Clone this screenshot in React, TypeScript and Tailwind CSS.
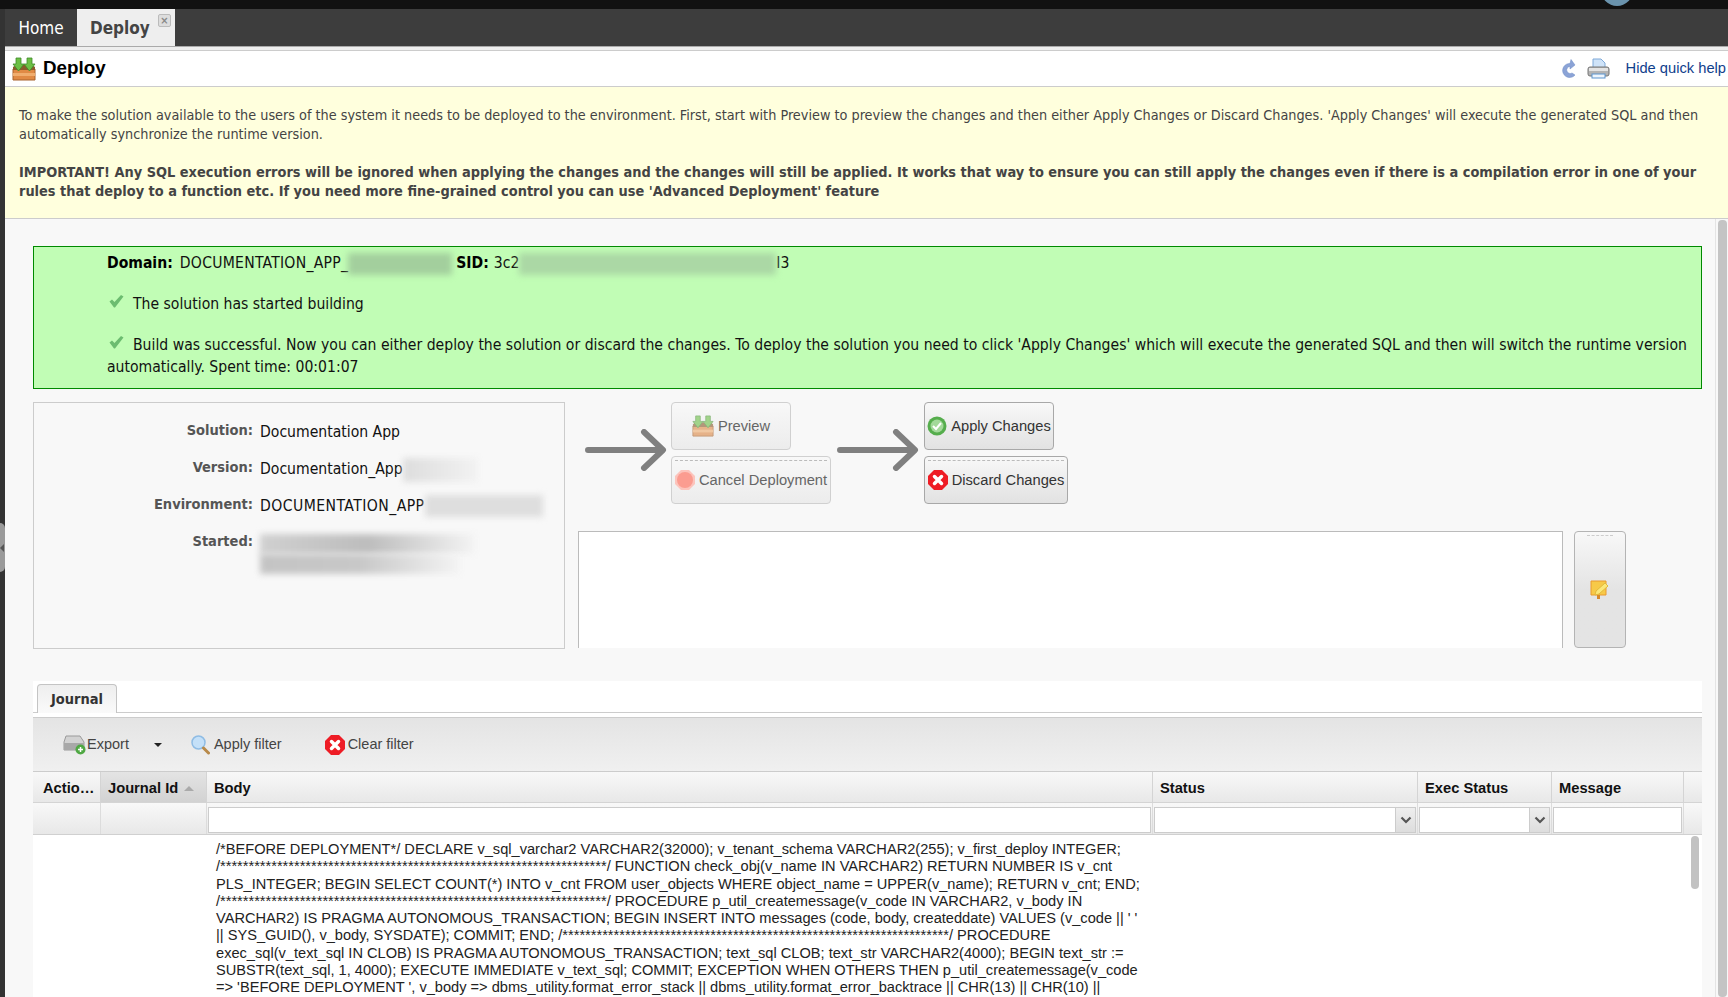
import React from "react";

const tahoma = "font-['DejaVu_Sans_Condensed','DejaVu_Sans',sans-serif] [font-stretch:condensed]";
const arial = "font-['Liberation_Sans',Arial,sans-serif]";

function BoxIcon({ size = 24, faded = false }: { size?: number; faded?: boolean }) {
  return (
    <svg width={size} height={size} viewBox="0 0 24 24" className={faded ? "opacity-60 shrink-0" : "shrink-0"}>
      <path d="M1 12h22v11H1z" fill="#e08a45" stroke="#a8622c" strokeWidth="1" />
      <path d="M1 16h22v3H1z" fill="#f0ad6e" />
      <path d="M1 10l3-2h16l3 2v3H1z" fill="#8a5a2c" />
      <path d="M4 1h5v6h3l-5.500 7L1 7h3z" fill="#6cbf45" stroke="#3f8a2a" strokeWidth="0.800" />
      <path d="M15 1h5v6h3l-5.500 7L12 7h3z" fill="#6cbf45" stroke="#3f8a2a" strokeWidth="0.800" />
    </svg>
  );
}

function Refresh() {
  return (
    <svg width="16" height="19" viewBox="0 0 16 19" className="shrink-0">
      <path d="M10 4.500a7 7 0 1 0 5 11.500l-3-2a3.500 3.500 0 1 1-2-6.500V10l5-4-4-5.500z" fill="#8ba3d6" stroke="#6d8ac4" strokeWidth="0.500" />
    </svg>
  );
}

function Printer() {
  return (
    <svg width="23" height="21" viewBox="0 0 23 21" className="shrink-0">
      <path d="M6 1h8l4 4v7H6z" fill="#cfe3f8" stroke="#7fa9d8" />
      <rect x="1" y="9" width="21" height="9" rx="2" fill="#b4b4b4" stroke="#777" />
      <rect x="2" y="10" width="19" height="3" fill="#e4e4e4" />
      <rect x="5" y="16" width="13" height="4" fill="#eef5fc" stroke="#5d95d0" />
    </svg>
  );
}

function Check() {
  return (
    <svg width="15" height="15" viewBox="0 0 15 15" className="shrink-0 translate-y-[-4px] ml-[2px]">
      <path d="M0.500 7.500L3 5.500l2.500 2.500L12 1l2.500 1.500L6 13.500H5z" fill="#6cbc70" />
    </svg>
  );
}

function CheckCircle() {
  return (
    <svg width="20" height="20" viewBox="0 0 20 20" className="shrink-0">
      <circle cx="10" cy="10" r="9.500" fill="#55ad4c" />
      <circle cx="10" cy="10" r="6.500" fill="#a3d99a" />
      <path d="M6 10l3 3 5-6" fill="none" stroke="#fff" strokeWidth="2" />
    </svg>
  );
}

function RedX() {
  return (
    <svg width="20" height="20" viewBox="0 0 20 20" className="shrink-0">
      <path d="M6 0h8l6 6v8l-6 6H6l-6-6V6z" fill="#ee1c25" />
      <path d="M6.500 6.500l7 7M13.500 6.500l-7 7" stroke="#fff" strokeWidth="3.500" strokeLinecap="round" />
    </svg>
  );
}

function Stop() {
  return (
    <svg width="20" height="20" viewBox="0 0 20 20" className="shrink-0">
      <path d="M6 0h8l6 6v8l-6 6H6l-6-6V6z" fill="#fcc4bc" />
      <circle cx="10" cy="10" r="8" fill="#fb9c90" />
    </svg>
  );
}

function Arrow() {
  return (
    <svg width="82" height="42" viewBox="0 0 82 42" className="shrink-0">
      <path d="M3 21h74M59 3l19 18-19 18" fill="none" stroke="#808080" strokeWidth="6" strokeLinecap="round" strokeLinejoin="round" />
    </svg>
  );
}

function Note() {
  return (
    <svg width="20" height="20" viewBox="0 0 20 20">
      <path d="M1 1h15v14H1z" fill="#f7c948" stroke="#ea9a2e" />
      <path d="M6 11l9-8 3 3-9 8-4 1z" fill="#fbe77a" stroke="#e2b93b" />
      <path d="M7 15h3v4H7z" fill="#d98a2b" />
    </svg>
  );
}

function ExportIcon() {
  return (
    <svg width="23" height="20" viewBox="0 0 23 20" className="shrink-0">
      <path d="M3 1h14l4 6v8H1V7z" fill="#d2d2d2" stroke="#9a9a9a" />
      <rect x="1" y="8" width="20" height="7" fill="#a8a8a8" />
      <circle cx="17.500" cy="14.500" r="5" fill="#4fa843" />
      <path d="M15 14.500h5M17.500 12v5" stroke="#fff" strokeWidth="1.500" />
    </svg>
  );
}

function Magnifier() {
  return (
    <svg width="19" height="20" viewBox="0 0 19 20" className="shrink-0">
      <circle cx="7.500" cy="7.500" r="6.500" fill="#c4e0f8" stroke="#8fbce4" strokeWidth="1.500" />
      <path d="M12.500 13l5 5" stroke="#b88a4a" strokeWidth="3" strokeLinecap="round" />
    </svg>
  );
}

function Chevron() {
  return (
    <svg width="12" height="8" viewBox="0 0 12 8">
      <path d="M1.500 1.500L6 6l4.500-4.500" fill="none" stroke="#555" strokeWidth="2.200" />
    </svg>
  );
}

function FlowButton({
  w,
  icon,
  label,
  disabled,
  dashed,
}: {
  w: string;
  icon: React.ReactNode;
  label: string;
  disabled?: boolean;
  dashed?: boolean;
}) {
  return (
    <div
      className={`relative ${w} h-[48px] flex items-center justify-center gap-[4px] rounded-[4px] border bg-gradient-to-b from-[#f8f8f8] ${
        disabled ? "border-[#d0d0d0] to-[#ececec] text-[#666]" : "border-[#a8a8a8] to-[#e2e2e2] text-[#333]"
      } ${arial} text-[14.700px]`}
    >
      {dashed && <div className="absolute left-[3px] right-[3px] top-[3px] border-t border-dashed border-[#bbb]" />}
      {icon}
      <span>{label}</span>
    </div>
  );
}

const stars = "********************************************************************";
const sqlLines = [
  "/*BEFORE DEPLOYMENT*/ DECLARE v_sql_varchar2 VARCHAR2(32000); v_tenant_schema VARCHAR2(255); v_first_deploy INTEGER;",
  `/${stars}/ FUNCTION check_obj(v_name IN VARCHAR2) RETURN NUMBER IS v_cnt`,
  "PLS_INTEGER; BEGIN SELECT COUNT(*) INTO v_cnt FROM user_objects WHERE object_name = UPPER(v_name); RETURN v_cnt; END;",
  `/${stars}/ PROCEDURE p_util_createmessage(v_code IN VARCHAR2, v_body IN`,
  "VARCHAR2) IS PRAGMA AUTONOMOUS_TRANSACTION; BEGIN INSERT INTO messages (code, body, createddate) VALUES (v_code || ' '",
  `|| SYS_GUID(), v_body, SYSDATE); COMMIT; END; /${stars}/ PROCEDURE`,
  "exec_sql(v_text_sql IN CLOB) IS PRAGMA AUTONOMOUS_TRANSACTION; text_sql CLOB; text_str VARCHAR2(4000); BEGIN text_str :=",
  "SUBSTR(text_sql, 1, 4000); EXECUTE IMMEDIATE v_text_sql; COMMIT; EXCEPTION WHEN OTHERS THEN p_util_createmessage(v_code",
  "=> 'BEFORE DEPLOYMENT ', v_body => dbms_utility.format_error_stack || dbms_utility.format_error_backtrace || CHR(13) || CHR(10) ||",
];

const headCell =
  "h-full flex items-center px-[7px] pt-[3px] border-r border-[#d4d4d4] font-bold text-[14.700px] text-[#111] whitespace-nowrap overflow-hidden shrink-0";
const filterCell = "h-full border-r border-[#dcdcdc] flex items-start pt-[4px] px-[1px] shrink-0";

function Blur({ className }: { className: string }) {
  return <span className={`inline-block blur-[3px] shrink-0 ${className}`} />;
}

function SelectInput() {
  return (
    <div className="w-full h-[26px] bg-white border border-[#ccc] flex justify-end">
      <div className="w-[20px] h-full bg-gradient-to-b from-[#eeeeee] to-[#dddddd] border-l border-[#ccc] flex items-center justify-center">
        <Chevron />
      </div>
    </div>
  );
}

export default function App() {
  return (
    <div className={`relative w-[1728px] h-[997px] overflow-hidden flex flex-col bg-[#f8f8f8] ${tahoma}`}>
      <div className="h-[9px] bg-[#111] shrink-0 relative overflow-hidden">
        <div className="absolute left-[1601px] top-[-26px] w-[32px] h-[32px] rounded-full bg-[#6a93ad]" />
      </div>
      <div className="absolute left-0 top-[523px] w-[5px] h-[49px] rounded-r-[5px] bg-[#9a9a9a] flex items-center">
        <div className="w-0 h-0 border-y-[4px] border-y-transparent border-r-[4px] border-r-[#555]" />
      </div>
      <div className="flex-1 flex min-h-0">
        <div className="w-[5px] bg-[#333] shrink-0" />
        <div className="flex-1 flex flex-col min-w-0">
          <div className="h-[37px] bg-[#3d3d3d] flex shrink-0">
            <div className="w-[72px] flex items-center justify-center pt-[2px] text-white text-[17px]">Home</div>
            <div className="relative w-[98px] bg-[#eeeeee] flex items-center pl-[13px] pt-[2px] text-[#444] text-[17px] font-bold">
              Deploy
              <div className="absolute right-[4px] top-[5px] w-[13px] h-[13px] rounded-[2px] border border-[#bbb] bg-[#ddd] flex items-center justify-center text-[#888] text-[11px] leading-none font-bold">
                ×
              </div>
            </div>
          </div>
          <div className="h-[5px] bg-[#eeeeee] border-t border-[#aaa] border-b-[1px] border-b-[#ccc] shrink-0" />
          <div className="h-[36px] bg-white border-b border-[#ccc] flex items-center pl-[7px] pr-[2px] shrink-0">
            <BoxIcon />
            <span className={`ml-[7px] text-[18.800px] font-bold text-black ${arial}`}>Deploy</span>
            <div className="ml-auto flex items-center">
              <Refresh />
              <span className="w-[11px]" />
              <Printer />
              <span className="w-[16px]" />
              <span className={`text-[14.700px] text-[#10408c] ${arial}`}>Hide quick help</span>
            </div>
          </div>
          <div className="h-[132px] shrink-0 bg-[#ffffdd] border-b border-[#ccc] pl-[14px] pr-[20px] pt-[19px] text-[14.300px] leading-[19px] text-[#444]">
            <p className="whitespace-nowrap">
              To make the solution available to the users of the system it needs to be deployed to the environment. First, start with Preview to preview the changes and then either Apply Changes or Discard Changes. 'Apply Changes' will execute the generated SQL and then
            </p>
            <p className="whitespace-nowrap">automatically synchronize the runtime version.</p>
            <p className="whitespace-nowrap mt-[19px] font-bold text-[14.420px]">
              IMPORTANT! Any SQL execution errors will be ignored when applying the changes and the changes will still be applied. It works that way to ensure you can still apply the changes even if there is a compilation error in one of your
            </p>
            <p className="whitespace-nowrap font-bold text-[14.420px]">
              rules that deploy to a function etc. If you need more fine-grained control you can use 'Advanced Deployment' feature
            </p>
          </div>
          <div className="flex-1 min-h-0 flex">
            <div className="flex-1 min-w-0 pl-[28px] pr-[13px] pt-[27px] flex flex-col overflow-hidden">
              <div className="h-[143px] shrink-0 bg-[#c1fdb5] border border-[#008a00] pl-[73px] pt-[6px] text-[15.600px] text-[#111]">
                <div className="h-[21px] flex items-center whitespace-nowrap">
                  <b className="text-black mr-[7px]">Domain:</b>
                  <span className="tracking-[0.250px]">DOCUMENTATION_APP_</span>
                  <Blur className="w-[104px] h-[22px] bg-[#a3cf9d]" />
                  <b className="text-black ml-[4px] mr-[5px]">SID:</b>
                  3c2
                  <Blur className="w-[257px] h-[22px] bg-[#abd8a5]" />
                  I3
                </div>
                <div className="mt-[19px] h-[24px] flex items-center whitespace-nowrap">
                  <Check />
                  <span className="ml-[9px]">The solution has started building</span>
                </div>
                <div className="mt-[17px] h-[24px] flex items-center whitespace-nowrap">
                  <Check />
                  <span className="ml-[9px]">
                    Build was successful. Now you can either deploy the solution or discard the changes. To deploy the solution you need to click 'Apply Changes' which will execute the generated SQL and then will switch the runtime version
                  </span>
                </div>
                <div className="mt-[-1px] h-[22px] flex items-center whitespace-nowrap">automatically. Spent time: 00:01:07</div>
              </div>
              <div className="mt-[13px] flex h-[247px] shrink-0">
                <div className="w-[532px] h-full shrink-0 border border-[#ccc] pt-[17px] grid grid-cols-[219px_1fr] auto-rows-[37px] gap-x-[7px]">
                  <div className="text-right font-bold text-[#555] text-[14.500px]">Solution:</div>
                  <div className="text-[#111] pt-[1px] text-[15.600px]">Documentation App</div>
                  <div className="text-right font-bold text-[#555] text-[14.500px]">Version:</div>
                  <div className="text-[#111] pt-[1px] flex text-[15.600px]">
                    Documentation_App
                    <Blur className="w-[75px] h-[24px] bg-gradient-to-r from-[#dddddd] to-[#f2f2f2]" />
                  </div>
                  <div className="text-right font-bold text-[#555] text-[14.500px]">Environment:</div>
                  <div className="text-[#111] pt-[1px] flex text-[15.600px] tracking-[0.450px]">
                    DOCUMENTATION_APP
                    <Blur className="w-[118px] h-[22px] bg-[#dedede]" />
                  </div>
                  <div className="text-right font-bold text-[#555] text-[14.500px]">Started:</div>
                  <div className="flex flex-col pt-[3px]">
                    <Blur className="w-[215px] h-[20px] bg-gradient-to-r from-[#d0d0d0] via-[#bdbdbd] to-[#f4f4f4]" />
                    <Blur className="w-[200px] h-[20px] bg-gradient-to-r from-[#c4c4c4] via-[#c8c8c8] to-[#f4f4f4]" />
                  </div>
                </div>
                <div className="ml-[13px] flex-1 min-w-0 flex flex-col">
                  <div className="flex items-start h-[102px] pl-[7px] shrink-0">
                    <div className="mt-[27px]">
                      <Arrow />
                    </div>
                    <div className="ml-[4px] w-[160px] flex flex-col gap-[6px] shrink-0">
                      <FlowButton w="w-[120px]" disabled icon={<BoxIcon size={22} faded />} label="Preview" />
                      <FlowButton w="w-[160px]" disabled dashed icon={<Stop />} label="Cancel Deployment" />
                    </div>
                    <div className="ml-[6px] mt-[27px]">
                      <Arrow />
                    </div>
                    <div className="ml-[5px] flex flex-col gap-[6px] shrink-0">
                      <FlowButton w="w-[130px]" icon={<CheckCircle />} label="Apply Changes" />
                      <FlowButton w="w-[144px]" dashed icon={<RedX />} label="Discard Changes" />
                    </div>
                  </div>
                  <div className="mt-[27px] flex h-[117px] shrink-0">
                    <div className="w-[985px] h-full bg-white border border-b-0 border-[#bbb]" />
                    <div className="relative ml-[11px] w-[52px] h-full rounded-[4px] border border-[#b4b4b4] bg-gradient-to-b from-[#f8f8f8] via-[#e4e4e4] to-[#e4e4e4] flex items-center justify-center">
                      <div className="absolute left-[12px] right-[12px] top-[3px] border-t border-dashed border-[#ccc]" />
                      <Note />
                    </div>
                  </div>
                </div>
              </div>
              <div className="mt-[32px] flex-1 min-h-0 bg-white flex flex-col overflow-hidden">
                <div className="h-[32px] shrink-0 pt-[3px] pl-[4px] border-b border-[#ccc]">
                  <div className="w-[80px] h-[29px] pt-[1px] rounded-t-[4px] border border-b-0 border-[#c4c4c4] bg-gradient-to-b from-[#eeeeee] to-[#fafafa] flex items-center justify-center font-bold text-[14.500px] text-[#333]">
                    Journal
                  </div>
                </div>
                <div className={`flex-1 min-h-0 mt-[4px] flex flex-col ${arial}`}>
                  <div className="h-[55px] shrink-0 border-y border-[#ccc] bg-gradient-to-b from-[#e4e4e4] to-[#f0f0f0] flex items-center text-[14.500px] text-[#444]">
                    <div className="ml-[30px]">
                      <ExportIcon />
                    </div>
                    <span className="ml-[1px]">Export</span>
                    <div className="ml-[25px] w-0 h-0 border-x-[4px] border-x-transparent border-t-[4px] border-t-[#222]" />
                    <div className="ml-[29px]">
                      <Magnifier />
                    </div>
                    <span className="ml-[4px]">Apply filter</span>
                    <div className="ml-[43px]">
                      <RedX />
                    </div>
                    <span className="ml-[3px]">Clear filter</span>
                  </div>
                  <div className="h-[31px] shrink-0 flex pl-[1px] bg-gradient-to-b from-[#f8f8f8] to-[#e8e8e8] border-b border-[#d4d4d4]">
                    <div className={`${headCell} w-[67px]`}>
                      <span className="pl-[2px]">Actio…</span>
                    </div>
                    <div className={`${headCell} w-[106px] bg-gradient-to-b from-[#e4e4e4] to-[#d2d2d2]`}>
                      Journal Id
                      <span className="ml-[6px] w-0 h-0 border-x-[5px] border-x-transparent border-b-[5px] border-b-[#aaa]" />
                    </div>
                    <div className={`${headCell} w-[946px]`}>Body</div>
                    <div className={`${headCell} w-[265px]`}>Status</div>
                    <div className={`${headCell} w-[134px]`}>Exec Status</div>
                    <div className={`${headCell} w-[132px]`}>Message</div>
                  </div>
                  <div className="h-[32px] shrink-0 flex pl-[1px] bg-gradient-to-b from-[#f8f8f8] to-[#e8e8e8] border-b border-[#d0d0d0]">
                    <div className={`${filterCell} w-[67px]`} />
                    <div className={`${filterCell} w-[106px]`} />
                    <div className={`${filterCell} w-[946px]`}>
                      <div className="w-full h-[26px] bg-white border border-[#ccc]" />
                    </div>
                    <div className={`${filterCell} w-[265px]`}>
                      <SelectInput />
                    </div>
                    <div className={`${filterCell} w-[134px]`}>
                      <SelectInput />
                    </div>
                    <div className={`${filterCell} w-[132px]`}>
                      <div className="w-full h-[26px] bg-white border border-[#ccc]" />
                    </div>
                  </div>
                  <div className="flex-1 min-h-0 flex bg-white overflow-hidden">
                    <div className="flex-1 min-w-0 pl-[183px] pt-[6px] text-[14.620px] leading-[17.300px] text-[#222]">
                      {sqlLines.map((line) => (
                        <div key={line} className="whitespace-nowrap">
                          {line}
                        </div>
                      ))}
                    </div>
                    <div className="w-[11px] shrink-0 pt-[1px]">
                      <div className="w-[8px] h-[53px] rounded-[4px] bg-[#c2c2c2]" />
                    </div>
                  </div>
                </div>
              </div>
            </div>
            <div className="w-[13px] shrink-0 border-l border-[#e4e4e4] flex justify-center pt-[1px]">
              <div className="w-[9px] h-full rounded-[4px] bg-[#c4c4c4]" />
            </div>
          </div>
        </div>
      </div>
    </div>
  );
}
